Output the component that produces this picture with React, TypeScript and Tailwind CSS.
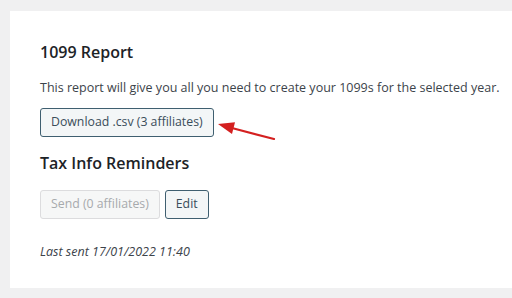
export default function App() {
  return (
    <div className="w-[512px] h-[298px] bg-[#f0f0f1] pt-[11px] pl-[10px] overflow-hidden" style={{ fontFamily: '"Open Sans", "Noto Sans", sans-serif' }}>
      <div className="bg-white h-[277px] pl-[30px] pt-[30px] relative">
        <h2 className="text-[16px] font-semibold text-[#1d2327] leading-[22px]">1099 Report</h2>
        <p className="mt-[16px] text-[12.5px] text-[#3c434a] leading-[18px]">This report will give you all you need to create your 1099s for the selected year.</p>
        <div className="mt-[11px] flex items-center">
          <button className="h-[29px] px-[10px] rounded-[3px] border border-[#3f5f70] bg-[#f3f6f7] text-[12.3px] text-[#3a4d5a]">Download .csv (3 affiliates)</button>
        </div>
        <svg className="absolute left-[200px] top-[100px]" width="70" height="40" viewBox="0 0 70 40">
          <line x1="64" y1="28" x2="20" y2="16.5" stroke="#d42020" strokeWidth="2.2" strokeLinecap="round" />
          <polygon points="8,13 22,23 25,11.3" fill="#d42020" />
        </svg>
        <h2 className="mt-[15px] text-[16px] font-semibold text-[#1d2327] leading-[22px]">Tax Info Reminders</h2>
        <div className="mt-[16px] flex items-center gap-[5px]">
          <button className="h-[29px] px-[10px] rounded-[3px] border border-[#dcdcde] bg-[#f6f7f7] text-[12.3px] text-[#a7aaad]">Send (0 affiliates)</button>
          <button className="h-[29px] px-[10px] rounded-[3px] border border-[#3f5f70] bg-[#f3f6f7] text-[12.3px] text-[#3a4d5a]">Edit</button>
        </div>
        <p className="mt-[24px] text-[12.5px] italic text-[#3c434a] leading-[18px]">Last sent 17/01/2022 11:40</p>
      </div>
    </div>
  );
}
